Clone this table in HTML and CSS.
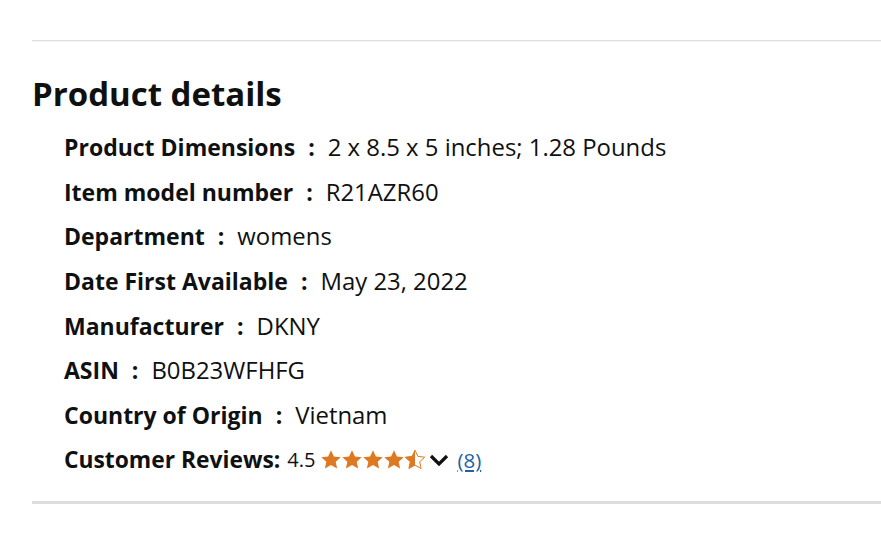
FILE: index.html
```html
<!DOCTYPE html>
<html>
<head>
<meta charset="utf-8">
<link rel="stylesheet" href="styles.css">
</head>
<body>
<div class="section">
  <hr class="divider-top">
  <h2 class="title">Product details</h2>
  <ul class="details">
    <li class="row"><span class="label">Product Dimensions</span><span class="sep">:</span><span class="value">2 x 8.5 x 5 inches; 1.28 Pounds</span></li>
    <li class="row"><span class="label">Item model number</span><span class="sep">:</span><span class="value">R21AZR60</span></li>
    <li class="row"><span class="label">Department</span><span class="sep">:</span><span class="value">womens</span></li>
    <li class="row"><span class="label">Date First Available</span><span class="sep">:</span><span class="value">May 23, 2022</span></li>
    <li class="row"><span class="label">Manufacturer</span><span class="sep">:</span><span class="value">DKNY</span></li>
    <li class="row"><span class="label">ASIN</span><span class="sep">:</span><span class="value">B0B23WFHFG</span></li>
    <li class="row"><span class="label">Country of Origin</span><span class="sep">:</span><span class="value">Vietnam</span></li>
    <li class="row reviews"><span class="label">Customer Reviews:</span><span class="score">4.5</span>
      <span class="stars">
        <svg width="106" height="22" viewBox="0 0 106 22">
          <defs>
            <path id="st" d="M11 1.2l2.9 6.2 6.8.8-5 4.6 1.4 6.7L11 16.1l-6.1 3.4 1.4-6.7-5-4.6 6.8-.8z"/>
            <linearGradient id="half" x1="0" x2="1" y1="0" y2="0">
              <stop offset="0.5" stop-color="#de7921"/>
              <stop offset="0.5" stop-color="#fff"/>
            </linearGradient>
          </defs>
          <use href="#st" x="0" fill="#de7921"/>
          <use href="#st" x="21" fill="#de7921"/>
          <use href="#st" x="42" fill="#de7921"/>
          <use href="#st" x="63" fill="#de7921"/>
          <use href="#st" x="84" fill="url(#half)" stroke="#de7921" stroke-width="1"/>
        </svg>
      </span>
      <svg class="chev" width="22" height="16" viewBox="0 0 22 16"><path d="M3 4l8 8 8-8" fill="none" stroke="#0f1111" stroke-width="3.2"/></svg>
      <a class="count" href="#">(8)</a>
    </li>
  </ul>
  <hr class="divider-bottom">
</div>
</body>
</html>
```
FILE: styles.css
```css
html, body {
  margin: 0;
  padding: 0;
  background: #fff;
}
body {
  font-family: "Open Sans", "Noto Sans", sans-serif;
  color: #0f1111;
}
.section {
  padding: 40px 0 0 32px;
}
.divider-top {
  margin: 0;
  border: 0;
  border-top: 1px solid #dddddd;
  box-shadow: 0 1px 0 #f5f5f5;
  height: 0;
}
.title {
  margin: 33px 0 0 0;
  font-size: 33px;
  font-weight: 700;
  line-height: 40px;
}
.details {
  list-style: none;
  margin: 18px 0 0 0;
  padding: 0 0 0 32px;
}
.row {
  font-size: 23px;
  line-height: 30px;
  margin-bottom: 14.7px;
  display: flex;
  align-items: center;
}
.label {
  font-weight: 700;
}
.value {
  font-size: 23.9px;
}
.sep {
  font-weight: 700;
  margin: 0 13px 0 13px;
}
.reviews .label {
  font-size: 22.8px;
}
.score {
  font-size: 20px;
  margin: 0 5px 0 7px;
}
.stars {
  display: inline-flex;
}
.chev {
  margin-left: 2px;
}
.count {
  margin-left: 7px;
  font-size: 20.5px;
  color: #2162a1;
  text-decoration: underline;
}
.divider-bottom {
  margin: 26px 0 0 0;
  border: 0;
  height: 3px;
  background: #dddddd;
}
```
